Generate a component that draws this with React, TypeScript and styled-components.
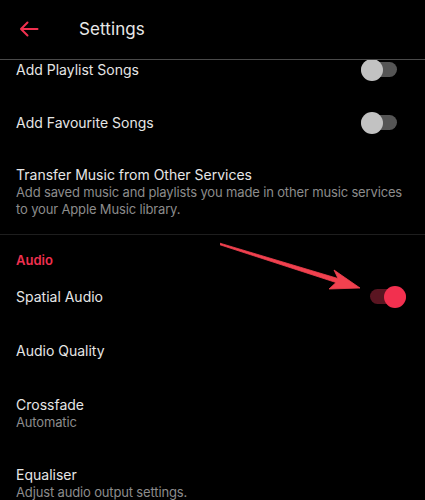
import React from 'react';
import styled, { createGlobalStyle } from 'styled-components';

const GlobalStyle = createGlobalStyle`
    html, body {
        margin: 0;
        padding: 0;
        background: #000;
    }
    body {
        font-family: Inter, "Noto Sans", "Liberation Sans", sans-serif;
        -webkit-font-smoothing: antialiased;
    }
`;

interface ToggleProps {
    on?: boolean;
    offset?: number;
}

const Toggle = ({ on, offset = 0 }: ToggleProps) => {
    return (
        <ToggleStyle $on={on} $offset={offset}>
            <span className="knob" />
        </ToggleStyle>
    );
};

interface RowProps {
    title: string;
    subtitle?: string;
    toggle?: 'on' | 'off';
    toggleOffset?: number;
    height: number;
}

const Row = ({ title, subtitle, toggle, toggleOffset, height }: RowProps) => {
    return (
        <RowStyle $height={height}>
            <div>
                <p className="title">{title}</p>
                {subtitle && <p className="subtitle">{subtitle}</p>}
            </div>
            {toggle && <Toggle on={toggle === 'on'} offset={toggleOffset} />}
        </RowStyle>
    );
};

const App = () => {
    return (
        <>
            <GlobalStyle />
            <Screen>
                <Header>
                    <BackButton aria-label="Back">
                        <svg width="20" height="16" viewBox="0 0 20 16" fill="none">
                            <path
                                d="M18.5 8H2M8.5 1.5L2 8l6.5 6.5"
                                stroke="#f0304f"
                                strokeWidth="2"
                                strokeLinecap="round"
                                strokeLinejoin="round"
                            />
                        </svg>
                    </BackButton>
                    <HeaderTitle>Settings</HeaderTitle>
                </Header>
                <Viewport>
                    <Content>
                        <Row title="Add Playlist Songs" toggle="off" height={53} />
                        <Row title="Add Favourite Songs" toggle="off" height={53} />
                        <Row
                            title="Transfer Music from Other Services"
                            subtitle="Add saved music and playlists you made in other music services to your Apple Music library."
                            height={85}
                        />
                        <Divider />
                        <SectionTitle>Audio</SectionTitle>
                        <Row title="Spatial Audio" toggle="on" toggleOffset={9} height={53} />
                        <Row title="Audio Quality" height={55} />
                        <Row title="Crossfade" subtitle="Automatic" height={70} />
                        <Row title="Equaliser" subtitle="Adjust audio output settings." height={70} />
                    </Content>
                    <Pointer width="160" height="60" viewBox="0 0 160 60">
                        <path
                            d="M0 1.2 L118 36.5 L114 28 L140 46 L109 47 L116 40.5 L0 2.8 Z"
                            fill="#f1414f"
                            stroke="#f1414f"
                            strokeWidth="0.8"
                            strokeLinejoin="round"
                        />
                    </Pointer>
                </Viewport>
            </Screen>
        </>
    );
};

const Screen = styled.div`
    width: 425px;
    height: 500px;
    background: #000;
    overflow: hidden;
    display: flex;
    flex-direction: column;
`;

const Header = styled.header`
    height: 59px;
    flex-shrink: 0;
    display: flex;
    align-items: center;
    border-bottom: 1px solid #4a4a4a;
    padding: 0 0 0 19px;
    box-sizing: content-box;
`;

const BackButton = styled.button`
    background: none;
    border: 0;
    padding: 0;
    width: 20px;
    height: 16px;
    display: flex;
    margin-top: -2px;
`;

const HeaderTitle = styled.h1`
    margin: -2px 0 0 40px;
    font-size: 17px;
    font-weight: 400;
    color: #e8e8e8;
    letter-spacing: 0.1px;
`;

const Viewport = styled.div`
    position: relative;
    flex: 1;
    overflow: hidden;
`;

const Content = styled.div`
    margin-top: -17px;
`;

const RowStyle = styled.div<{ $height: number }>`
    height: ${({ $height }) => $height}px;
    display: flex;
    align-items: center;
    justify-content: space-between;
    padding: 0 14px 0 16px;

    p {
        margin: 0;
    }
    .title {
        font-size: 14px;
        line-height: 17px;
        color: #e6e6e6;
    }
    .subtitle {
        font-size: 13px;
        line-height: 17px;
        letter-spacing: -0.15px;
        color: #8c8c8c;
        margin-top: 1px;
    }
`;

const ToggleStyle = styled.div<{ $on?: boolean; $offset: number }>`
    position: relative;
    flex-shrink: 0;
    width: 36px;
    height: 15px;
    border-radius: 8px;
    margin-right: ${({ $offset }) => 14 - $offset}px;
    background: ${({ $on }) => ($on ? '#5a1521' : '#555')};

    .knob {
        position: absolute;
        top: 50%;
        left: ${({ $on }) => ($on ? '14px' : '0')};
        width: 22px;
        height: 22px;
        margin-top: -11px;
        border-radius: 50%;
        background: ${({ $on }) => ($on ? '#f2304f' : '#c2c2c2')};
    }
`;

const Divider = styled.hr`
    margin: 0;
    border: 0;
    border-top: 1px solid #1e1e1e;
`;

const SectionTitle = styled.h2`
    margin: 0;
    padding: 17px 16px 1px;
    font-size: 13px;
    line-height: 17px;
    font-weight: 600;
    color: #f0304f;
`;

const Pointer = styled.svg`
    position: absolute;
    left: 220px;
    top: 182px;
`;

export default App;
